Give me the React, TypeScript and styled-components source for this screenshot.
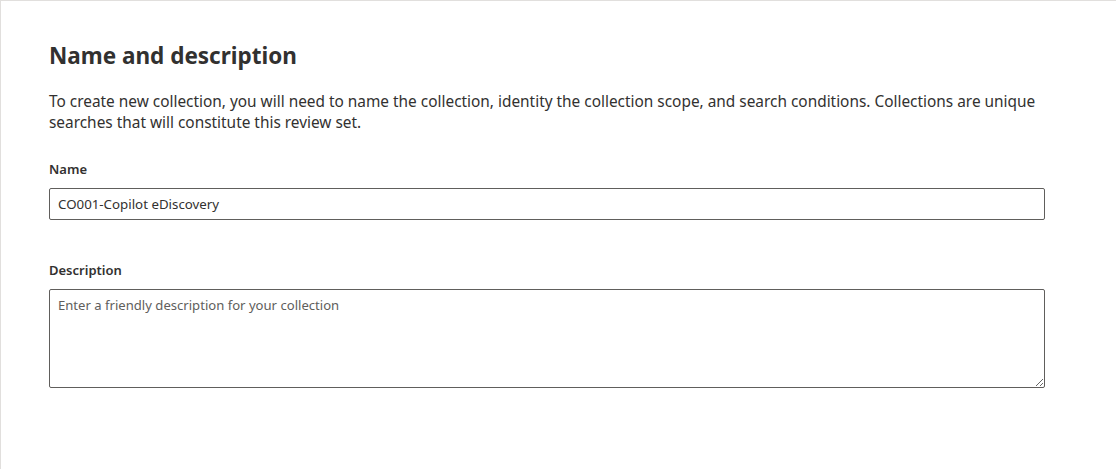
import React from "react";
import styled, { createGlobalStyle } from "styled-components";

const Global = createGlobalStyle`
  html, body { margin: 0; padding: 0; background: #fff; }
  body { font-family: "Segoe UI", "Noto Sans", "Open Sans", sans-serif; color: #323130; }
  * { box-sizing: border-box; }
`;

const Page = styled.div`
  width: 1116px;
  height: 469px;
  border-top: 1px solid #e1dfdd;
  border-left: 1px solid #e1dfdd;
  padding: 39px 0 0 48px;
  background: #fff;
`;

const Form = styled.div`
  width: 996px;
  display: flex;
  flex-direction: column;
`;

const Heading = styled.h2`
  margin: 0;
  font-size: 22.5px;
  line-height: 32px;
  font-weight: 700;
  color: #323130;
`;

const Intro = styled.p`
  margin: 19px 0 0;
  font-size: 15.4px;
  line-height: 21px;
  color: #323130;
`;

const Field = styled.div<{ $gap: number }>`
  display: flex;
  flex-direction: column;
  margin-top: ${(p) => p.$gap}px;
`;

const Label = styled.label`
  font-size: 13px;
  font-weight: 600;
  line-height: 20px;
  color: #323130;
  margin-bottom: 9px;
`;

const TextInput = styled.input`
  width: 100%;
  height: 32px;
  border: 1px solid #605e5c;
  border-radius: 2px;
  padding: 0 8px;
  font-family: inherit;
  font-size: 13.3px;
  color: #323130;
  outline: none;
  background: #fff;
`;

const TextArea = styled.textarea`
  width: 100%;
  height: 99px;
  border: 1px solid #605e5c;
  border-radius: 2px;
  padding: 5px 8px;
  font-family: inherit;
  font-size: 13.1px;
  line-height: 20px;
  color: #323130;
  outline: none;
  resize: vertical;
  background: #fff;
  &::placeholder { color: #605e5c; opacity: 1; }
`;

export default function App() {
  return (
    <>
      <Global />
      <Page>
        <Form>
          <Heading>Name and description</Heading>
          <Intro>
            To create new collection, you will need to name the collection, identity the collection scope, and search
            conditions. Collections are unique searches that will constitute this review set.
          </Intro>
          <Field $gap={26}>
            <Label>Name</Label>
            <TextInput defaultValue="CO001-Copilot eDiscovery" />
          </Field>
          <Field $gap={40}>
            <Label>Description</Label>
            <TextArea placeholder="Enter a friendly description for your collection" />
          </Field>
        </Form>
      </Page>
    </>
  );
}
